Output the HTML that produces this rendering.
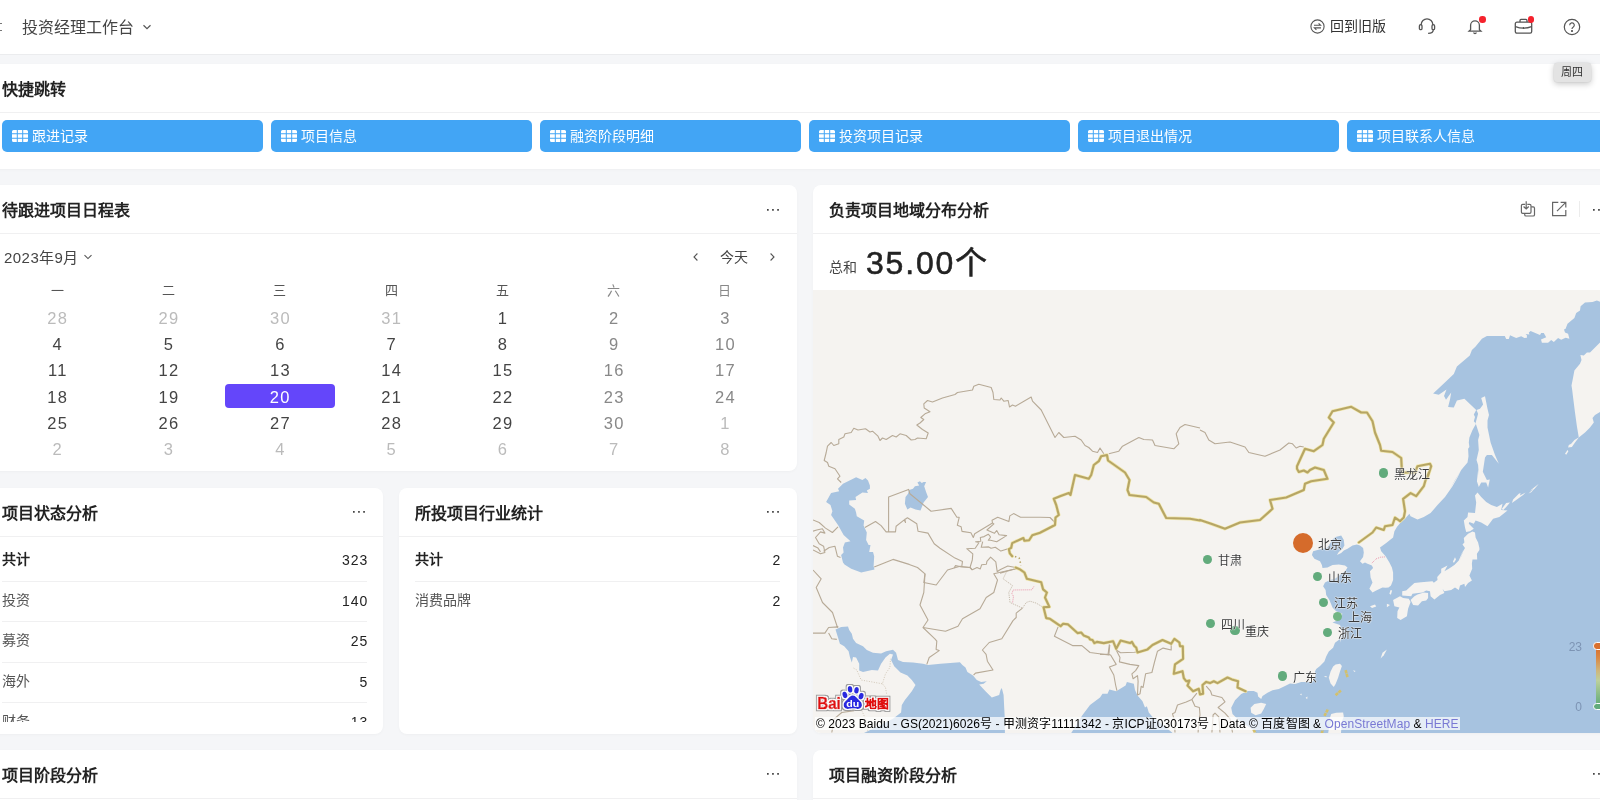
<!DOCTYPE html>
<html lang="zh-CN">
<head>
<meta charset="utf-8">
<title>投资经理工作台</title>
<style>
*{box-sizing:border-box;margin:0;padding:0}
html{will-change:transform}
html,body{width:1600px;height:800px;overflow:hidden;background:#f5f6f8;font-family:"Liberation Sans",sans-serif;color:#333}
#app{position:absolute;left:0;top:0;width:1600px;height:800px;overflow:hidden;background:#f5f6f8}
.abs{position:absolute}
.hdr{position:absolute;left:0;top:0;width:1600px;height:55px;background:#fff;border-bottom:1px solid #ebecee}
.hdr .ttl{position:absolute;left:22px;top:15.5px;font-size:16px;line-height:24px;color:#444;font-weight:500}
.card{position:absolute;background:#fff;border-radius:8px;box-shadow:0 1px 3px rgba(0,0,0,.03)}
.ct{position:absolute;left:0;top:0;right:0;height:49px;border-bottom:1px solid #f0f0f1}
.ct b{position:absolute;top:14.5px;font-size:16px;line-height:22px;font-weight:700;color:#222}
.dots{position:absolute;top:14px;font-size:16px;line-height:22px;color:#666;letter-spacing:1px}
.btn{position:absolute;top:56.2px;height:32.3px;width:261px;background:#42a5f5;border-radius:5px;color:#fff;font-size:14px;line-height:32px;padding-left:30px}
.btn svg{position:absolute;left:10px;top:10px}
.cal{position:absolute;left:1.5px;top:93px;width:779px}
.cal div{position:absolute;width:111.3px;text-align:center;font-size:16.5px;line-height:24px;color:#444;margin-top:1px;letter-spacing:1.3px;padding-left:1.3px}
.cal .w{font-size:13px;color:#555;margin-top:0;letter-spacing:0;padding-left:0}
.cal .we{color:#888}
.cal .o{color:#bbb}
.cal .sel{background:#6446fa;color:#fff;border-radius:4px;width:110px;margin-top:0;line-height:26px;height:24px;}
.row{position:absolute;left:2px;height:40.6px;font-size:14px;line-height:37.5px;color:#555;border-bottom:1px solid #f0f0f1}
.row i{position:absolute;right:-1.3px;top:1px;font-style:normal;color:#222;font-size:14px;letter-spacing:1px}
.row.t{font-weight:700;color:#222}
.row.t i{font-weight:400}
.mk{position:absolute;border-radius:50%}
.ml{position:absolute;font-size:12px;line-height:16px;color:#3a3a3a;white-space:nowrap;text-shadow:0 0 1.5px #fff,0 0 1.5px #fff,0 0 1px #fff}
.lg{position:absolute;width:30px;text-align:right;font-size:12px;line-height:16px;color:#7d94b4}
.cp{position:absolute;height:13.5px;font-size:12px;line-height:15.5px;overflow:hidden;letter-spacing:.065px;color:#000;background:rgba(255,255,255,.7);white-space:nowrap;padding:0 1px}
.cp span{color:#7979d4}
</style>
</head>
<body>
<div id="app">
<!-- header -->
<div class="hdr">
  <div class="abs" style="left:0;top:22.5px;width:1.5px;height:8px;border-top:1.5px solid #777;border-bottom:1.5px solid #777"></div>
  <div class="ttl">投资经理工作台</div>
  <svg class="abs" style="left:141px;top:21px" width="12" height="12" viewBox="0 0 12 12"><path d="M2.5 4.2 L6 7.6 L9.5 4.2" fill="none" stroke="#555" stroke-width="1.2"/></svg>
  <!-- right icons -->
  <svg class="abs" style="left:1309px;top:18px" width="17" height="17" viewBox="0 0 17 17" fill="none" stroke="#555" stroke-width="1.1"><circle cx="8.5" cy="8.5" r="6.6"/><path d="M5 7.3h6.6l-2-2M12 9.9H5.4l2 2"/></svg>
  <div class="abs" style="left:1330px;top:16px;font-size:14px;line-height:21px;color:#333">回到旧版</div>
  <svg class="abs" style="left:1417px;top:16px" width="20" height="20" viewBox="0 0 20 20" fill="none" stroke="#555" stroke-width="1.3"><path d="M4.2 9.3V8.6a5.8 5.8 0 0 1 11.6 0v.7"/><rect x="2.4" y="8.7" width="2.6" height="5" rx="1.3"/><rect x="15" y="8.7" width="2.6" height="5" rx="1.3"/><path d="M16.3 13.7c0 2.2-2 3.6-5.2 3.6"/></svg>
  <svg class="abs" style="left:1465px;top:16px" width="20" height="20" viewBox="0 0 20 20" fill="none" stroke="#555" stroke-width="1.3"><path d="M5.6 13.6V9.2a4.4 4.4 0 0 1 8.8 0v4.4l1.6 1.6H4z"/><path d="M8.6 16.6a1.5 1.5 0 0 0 2.8 0"/></svg>
  <div class="abs" style="left:1479px;top:16px;width:6.5px;height:6.5px;border-radius:50%;background:#f5222d"></div>
  <svg class="abs" style="left:1513px;top:16px" width="21" height="20" viewBox="0 0 21 20" fill="none" stroke="#555" stroke-width="1.3"><rect x="2.3" y="6.2" width="16.4" height="11" rx="1.6"/><path d="M7 6V4.4c0-.6.4-1 1-1h5c.6 0 1 .4 1 1V6M2.5 10.6c3 1.2 5 1.6 8 1.6s5-.4 8-1.6M10.5 11v2"/></svg>
  <div class="abs" style="left:1527.5px;top:16px;width:6.5px;height:6.5px;border-radius:50%;background:#f5222d"></div>
  <svg class="abs" style="left:1562px;top:16.5px" width="20" height="20" viewBox="0 0 20 20" fill="none" stroke="#555" stroke-width="1.2"><circle cx="10" cy="10" r="7.7"/><path d="M7.7 8.2a2.3 2.3 0 1 1 3.4 2c-.8.5-1.1.9-1.1 1.8"/><circle cx="10" cy="14" r=".5" fill="#555"/></svg>
</div>

<!-- quick jump -->
<div class="card" style="left:-8px;top:64px;width:1620px;height:104.5px">
  <div class="ct"><b style="left:10px">快捷跳转</b></div>
  <div class="btn" style="left:10px"><svg width="16" height="12" viewBox="0 0 16 12"><path fill="#fff" d="M1.5 0h3.3v3.3H0V1.5A1.5 1.5 0 0 1 1.5 0zM5.8 0h4.4v3.3H5.8zM11.2 0h3.3A1.5 1.5 0 0 1 16 1.500V3.3h-4.8zM0 4.300h4.8v3.400H0zM5.8 4.300h4.400v3.400H5.800zM11.200 4.300H16v3.400h-4.800zM0 8.700h4.800V12H1.500A1.500 1.500 0 0 1 0 10.500zM5.800 8.700h4.400V12H5.800zM11.200 8.700H16v1.800a1.500 1.500 0 0 1-1.500 1.500h-3.300z"/></svg>跟进记录</div>
  <div class="btn" style="left:279px"><svg width="16" height="12" viewBox="0 0 16 12"><path fill="#fff" d="M1.5 0h3.3v3.3H0V1.5A1.5 1.5 0 0 1 1.5 0zM5.8 0h4.400v3.300H5.800zM11.200 0h3.300A1.500 1.500 0 0 1 16 1.500V3.300h-4.800zM0 4.300h4.800v3.400H0zM5.800 4.300h4.400v3.400H5.800zM11.200 4.300H16v3.400h-4.800zM0 8.700h4.800V12H1.500A1.500 1.500 0 0 1 0 10.500zM5.800 8.700h4.400V12H5.800zM11.200 8.700H16v1.800a1.500 1.500 0 0 1-1.500 1.500h-3.300z"/></svg>项目信息</div>
  <div class="btn" style="left:548.1px"><svg width="16" height="12" viewBox="0 0 16 12"><path fill="#fff" d="M1.5 0h3.3v3.3H0V1.5A1.5 1.5 0 0 1 1.5 0zM5.800 0h4.400v3.300H5.800zM11.200 0h3.300A1.500 1.500 0 0 1 16 1.500V3.300h-4.800zM0 4.300h4.800v3.400H0zM5.800 4.300h4.400v3.400H5.800zM11.200 4.300H16v3.400h-4.800zM0 8.700h4.800V12H1.500A1.500 1.500 0 0 1 0 10.500zM5.800 8.700h4.400V12H5.800zM11.200 8.700H16v1.800a1.500 1.500 0 0 1-1.500 1.500h-3.300z"/></svg>融资阶段明细</div>
  <div class="btn" style="left:817.2px"><svg width="16" height="12" viewBox="0 0 16 12"><path fill="#fff" d="M1.5 0h3.3v3.3H0V1.5A1.5 1.5 0 0 1 1.5 0zM5.800 0h4.400v3.300H5.800zM11.200 0h3.300A1.500 1.500 0 0 1 16 1.500V3.300h-4.800zM0 4.300h4.800v3.400H0zM5.800 4.300h4.400v3.400H5.800zM11.200 4.300H16v3.400h-4.800zM0 8.700h4.800V12H1.500A1.500 1.500 0 0 1 0 10.500zM5.800 8.700h4.400V12H5.800zM11.200 8.700H16v1.800a1.500 1.500 0 0 1-1.500 1.500h-3.300z"/></svg>投资项目记录</div>
  <div class="btn" style="left:1086.2px"><svg width="16" height="12" viewBox="0 0 16 12"><path fill="#fff" d="M1.5 0h3.3v3.3H0V1.5A1.5 1.5 0 0 1 1.5 0zM5.800 0h4.400v3.300H5.800zM11.200 0h3.300A1.500 1.500 0 0 1 16 1.500V3.300h-4.800zM0 4.300h4.800v3.400H0zM5.800 4.300h4.400v3.400H5.800zM11.200 4.300H16v3.400h-4.800zM0 8.700h4.800V12H1.500A1.500 1.500 0 0 1 0 10.500zM5.800 8.700h4.400V12H5.800zM11.200 8.700H16v1.800a1.500 1.500 0 0 1-1.500 1.500h-3.300z"/></svg>项目退出情况</div>
  <div class="btn" style="left:1355.3px"><svg width="16" height="12" viewBox="0 0 16 12"><path fill="#fff" d="M1.5 0h3.3v3.3H0V1.5A1.5 1.5 0 0 1 1.5 0zM5.800 0h4.400v3.300H5.800zM11.200 0h3.300A1.500 1.500 0 0 1 16 1.500V3.300h-4.800zM0 4.300h4.800v3.400H0zM5.800 4.300h4.400v3.400H5.800zM11.200 4.300H16v3.400h-4.800zM0 8.700h4.800V12H1.500A1.500 1.500 0 0 1 0 10.500zM5.800 8.700h4.400V12H5.800zM11.200 8.700H16v1.800a1.500 1.500 0 0 1-1.500 1.500h-3.300z"/></svg>项目联系人信息</div>
</div>
<!-- tooltip -->
<div class="abs" style="left:1554px;top:62.5px;width:36.5px;height:19.5px;background:#e3e3e3;border-radius:3px;box-shadow:0 2px 6px rgba(0,0,0,.22),0 0 0 .5px rgba(0,0,0,.06);font-size:11px;line-height:19.5px;text-align:center;color:#333">周四</div>

<!-- calendar card -->
<div class="card" style="left:-8px;top:185px;width:805px;height:286px">
  <div class="ct"><b style="left:10px">待跟进项目日程表</b><svg class="abs" style="left:774.90px;top:24.05px" width="13" height="2" viewBox="0 0 13 2"><path fill="#444" d="M0 0h1.700v1.700H0zM5.100 0h1.700v1.700H5.100zM10.200 0h1.700v1.700H10.200z"/></svg></div>
  <div class="abs" style="left:12px;top:61.5px;font-size:15px;line-height:22px;color:#444;letter-spacing:.45px">2023年9月</div>
  <svg class="abs" style="left:90px;top:66px" width="12" height="12" viewBox="0 0 12 12"><path d="M2.5 4.2 L6 7.6 L9.5 4.2" fill="none" stroke="#555" stroke-width="1.1"/></svg>
  <svg class="abs" style="left:698px;top:66px" width="12" height="12" viewBox="0 0 12 12"><path d="M7.4 2.5 L4 6 L7.4 9.5" fill="none" stroke="#555" stroke-width="1.1"/></svg>
  <div class="abs" style="left:728px;top:61px;font-size:14px;line-height:22px;color:#444">今天</div>
  <svg class="abs" style="left:774px;top:66px" width="12" height="12" viewBox="0 0 12 12"><path d="M4.6 2.5 L8 6 L4.6 9.5" fill="none" stroke="#555" stroke-width="1.1"/></svg>
  <div class="cal" style="left:9.5px">
<div class="w" style="left:0.0px;top:1px">一</div><div class="w" style="left:111.3px;top:1px">二</div><div class="w" style="left:222.6px;top:1px">三</div><div class="w" style="left:333.9px;top:1px">四</div><div class="w" style="left:445.2px;top:1px">五</div><div class="w we" style="left:556.5px;top:1px">六</div><div class="w we" style="left:667.8px;top:1px">日</div>
<div class="o" style="left:0.0px;top:27.0px">28</div><div class="o" style="left:111.3px;top:27.0px">29</div><div class="o" style="left:222.6px;top:27.0px">30</div><div class="o" style="left:333.9px;top:27.0px">31</div><div style="left:445.2px;top:27.0px">1</div><div class="we" style="left:556.5px;top:27.0px">2</div><div class="we" style="left:667.8px;top:27.0px">3</div>
<div style="left:0.0px;top:53.2px">4</div><div style="left:111.3px;top:53.2px">5</div><div style="left:222.6px;top:53.2px">6</div><div style="left:333.9px;top:53.2px">7</div><div style="left:445.2px;top:53.2px">8</div><div class="we" style="left:556.5px;top:53.2px">9</div><div class="we" style="left:667.8px;top:53.2px">10</div>
<div style="left:0.0px;top:79.4px">11</div><div style="left:111.3px;top:79.4px">12</div><div style="left:222.6px;top:79.4px">13</div><div style="left:333.9px;top:79.4px">14</div><div style="left:445.2px;top:79.4px">15</div><div class="we" style="left:556.5px;top:79.4px">16</div><div class="we" style="left:667.8px;top:79.4px">17</div>
<div style="left:0.0px;top:105.6px">18</div><div style="left:111.3px;top:105.6px">19</div><div class="sel" style="left:223.2px;top:105.6px">20</div><div style="left:333.9px;top:105.6px">21</div><div style="left:445.2px;top:105.6px">22</div><div class="we" style="left:556.5px;top:105.6px">23</div><div class="we" style="left:667.8px;top:105.6px">24</div>
<div style="left:0.0px;top:131.8px">25</div><div style="left:111.3px;top:131.8px">26</div><div style="left:222.6px;top:131.8px">27</div><div style="left:333.9px;top:131.8px">28</div><div style="left:445.2px;top:131.8px">29</div><div class="we" style="left:556.5px;top:131.8px">30</div><div class="o" style="left:667.8px;top:131.8px">1</div>
<div class="o" style="left:0.0px;top:158.0px">2</div><div class="o" style="left:111.3px;top:158.0px">3</div><div class="o" style="left:222.6px;top:158.0px">4</div><div class="o" style="left:333.9px;top:158.0px">5</div><div class="o" style="left:445.2px;top:158.0px">6</div><div class="o" style="left:556.5px;top:158.0px">7</div><div class="o" style="left:667.8px;top:158.0px">8</div>
</div>
</div>

<!-- status card -->
<div class="card" style="left:-8px;top:488px;width:391px;height:245.6px;overflow:hidden">
  <div class="ct"><b style="left:10px">项目状态分析</b><svg class="abs" style="left:360.90px;top:23.05px" width="13" height="2" viewBox="0 0 13 2"><path fill="#444" d="M0 0h1.700v1.700H0zM5.100 0h1.700v1.700H5.100zM10.200 0h1.700v1.700H10.200z"/></svg></div>
  <div class="abs" style="left:8px;top:53.4px;width:369px;height:181px;overflow:hidden">
    <div class="row t" style="top:0;width:365px">共计<i>323</i></div>
    <div class="row" style="top:40.4px;width:365px">投资<i>140</i></div>
    <div class="row" style="top:80.8px;width:365px">募资<i>25</i></div>
    <div class="row" style="top:121.2px;width:365px">海外<i>5</i></div>
    <div class="row" style="top:161.6px;width:365px">财务<i>13</i></div>
  </div>
</div>

<!-- industry card -->
<div class="card" style="left:399px;top:488px;width:398px;height:245.6px">
  <div class="ct"><b style="left:16px">所投项目行业统计</b><svg class="abs" style="left:367.90px;top:23.05px" width="13" height="2" viewBox="0 0 13 2"><path fill="#444" d="M0 0h1.700v1.700H0zM5.100 0h1.700v1.700H5.100zM10.200 0h1.700v1.700H10.200z"/></svg></div>
  <div class="abs" style="left:14px;top:53.4px;width:369px;height:181px;overflow:hidden">
    <div class="row t" style="top:0;width:365px">共计<i>2</i></div>
    <div class="row" style="top:40.4px;width:365px;border-bottom:none">消费品牌<i>2</i></div>
  </div>
</div>

<!-- stage card -->
<div class="card" style="left:-8px;top:750px;width:805px;height:100px">
  <div class="ct"><b style="left:10px">项目阶段分析</b><svg class="abs" style="left:774.90px;top:23.05px" width="13" height="2" viewBox="0 0 13 2"><path fill="#444" d="M0 0h1.700v1.700H0zM5.100 0h1.700v1.700H5.100zM10.200 0h1.700v1.700H10.200z"/></svg></div>
</div>

<!-- finance stage card -->
<div class="card" style="left:813px;top:750px;width:800px;height:100px">
  <div class="ct"><b style="left:16px">项目融资阶段分析</b><svg class="abs" style="left:780.35px;top:23.05px" width="13" height="2" viewBox="0 0 13 2"><path fill="#444" d="M0 0h1.700v1.700H0zM5.100 0h1.700v1.700H5.100zM10.200 0h1.700v1.700H10.200z"/></svg></div>
</div>

<!-- map card -->
<div class="card" id="mapcard" style="left:813px;top:185px;width:800px;height:548px;overflow:hidden;border-radius:8px 0 0 8px">
  <div class="ct"><b style="left:16px">负责项目地域分布分析</b><svg class="abs" style="left:780.35px;top:24.05px" width="13" height="2" viewBox="0 0 13 2"><path fill="#444" d="M0 0h1.700v1.700H0zM5.100 0h1.700v1.700H5.100zM10.200 0h1.700v1.700H10.200z"/></svg></div>
  <svg class="abs" style="left:706px;top:15px" width="18" height="18" viewBox="0 0 18 18" fill="none" stroke="#666" stroke-width="1.2"><path d="M6.2 4.400H3.700a1.300 1.300 0 0 0-1.300 1.300v6.300a1.300 1.300 0 0 0 1.300 1.300h7a1.300 1.300 0 0 0 1.300-1.300V5.700a1.300 1.300 0 0 0-1.300-1.300H8.300"/><path d="M7.200 1.200v7.600M4.600 6.500l2.600 2.500 2.600-2.500"/><path d="M5.700 13.500v1.200a1.300 1.300 0 0 0 1.300 1.300h7.200a1.300 1.300 0 0 0 1.300-1.300V8.200a1.300 1.300 0 0 0-1.300-1.300h-2"/></svg>
<svg class="abs" style="left:737px;top:15px" width="18" height="18" viewBox="0 0 18 18" fill="none" stroke="#666" stroke-width="1.2"><path d="M8.300 2.400H2.600v13.200h13.200V10"/><path d="M10.600 2.400h5.200v5.200M15.800 2.400L7 11.200"/></svg>
<div class="abs" style="left:766px;top:16px;width:1px;height:16px;background:#ececec"></div>
  <div class="abs" style="left:16px;top:73px;font-size:14px;line-height:18px;color:#444">总和</div>
  <div class="abs" style="left:53px;top:56px;font-size:32px;line-height:44px;color:#222;letter-spacing:1.8px;-webkit-text-stroke:.55px #222">35.00个</div>
  <!--MAP-->
<svg class="abs" style="left:0;top:105px" width="800" height="443" viewBox="813 290 800 443">
<rect x="813" y="290" width="800" height="443" fill="#f5f3f0"/>
<g fill="#a7c3e0">
<path d="M1602.5 302.5 L1596.9 300.6 L1592.5 301.9 L1585.0 302.5 L1580.6 306.2 L1580.0 310.6 L1576.2 313.1 L1574.4 318.1 L1567.5 323.8 L1565.6 328.8 L1564.0 329.4 L1565.0 332.5 L1568.1 333.8 L1569.4 338.8 L1565.6 337.8 L1561.2 339.8 L1558.1 338.1 L1553.8 341.9 L1551.2 340.0 L1548.1 342.8 L1541.9 342.8 L1541.0 339.4 L1546.2 337.2 L1543.8 333.1 L1541.2 333.1 L1540.0 335.0 L1530.6 331.0 L1528.8 332.5 L1529.4 334.4 L1525.6 334.0 L1526.9 335.2 L1526.9 337.8 L1524.4 338.1 L1521.2 336.2 L1516.2 338.1 L1510.0 335.2 L1508.8 339.0 L1506.2 339.0 L1504.8 336.0 L1486.9 336.0 L1481.9 338.8 L1475.6 346.5 L1471.9 350.0 L1469.8 355.6 L1456.9 366.5 L1453.8 374.0 L1446.2 381.2 L1436.9 390.0 L1433.1 393.5 L1438.8 394.8 L1446.5 389.5 L1444.0 396.0 L1446.0 399.8 L1451.2 392.5 L1450.0 399.4 L1448.1 406.9 L1453.8 407.5 L1456.9 400.6 L1464.4 398.8 L1476.2 410.0 L1473.8 414.4 L1475.0 416.9 L1473.8 421.2 L1476.0 423.8 L1472.5 430.0 L1469.4 437.5 L1468.8 442.5 L1469.4 446.9 L1468.1 448.8 L1468.5 456.2 L1467.5 462.5 L1461.2 470.0 L1455.0 480.0 L1449.4 490.0 L1461.2 470.0 L1457.5 477.5 L1452.5 486.2 L1445.0 496.9 L1437.5 505.0 L1430.6 513.1 L1423.8 516.9 L1417.5 519.4 L1410.6 516.2 L1409.4 513.8 L1405.0 518.8 L1400.6 522.5 L1396.9 526.9 L1394.4 531.2 L1393.1 537.5 L1386.2 543.1 L1380.0 547.5 L1381.2 551.2 L1385.6 556.2 L1389.4 562.5 L1391.9 567.5 L1393.1 572.5 L1393.1 580.0 L1391.0 585.6 L1388.5 587.5 L1385.6 587.8 L1382.5 587.5 L1376.2 590.6 L1372.5 592.5 L1369.4 588.8 L1372.5 582.5 L1370.6 577.5 L1370.0 571.2 L1373.1 568.1 L1371.9 565.6 L1367.5 563.8 L1365.0 562.5 L1362.5 563.8 L1360.0 561.2 L1363.1 556.9 L1363.8 552.5 L1363.1 548.1 L1360.0 545.6 L1356.9 544.4 L1352.5 545.6 L1347.5 548.8 L1343.8 550.6 L1341.2 553.1 L1336.9 555.0 L1338.8 551.9 L1342.5 548.8 L1344.4 545.6 L1343.8 540.0 L1341.2 535.6 L1335.6 536.9 L1331.9 540.0 L1330.0 543.8 L1327.5 547.5 L1317.5 550.0 L1313.1 551.2 L1311.9 555.0 L1314.4 558.8 L1320.0 561.2 L1321.9 565.0 L1322.5 568.1 L1327.5 567.5 L1332.5 565.0 L1338.8 564.4 L1345.0 565.6 L1347.5 567.5 L1345.6 570.6 L1340.0 575.0 L1335.0 578.8 L1330.0 580.0 L1325.0 582.5 L1323.1 586.2 L1325.6 590.0 L1326.2 595.0 L1329.4 600.0 L1332.5 607.5 L1336.2 611.2 L1342.5 613.8 L1338.8 620.0 L1332.5 622.5 L1340.0 625.0 L1342.5 632.5 L1340.0 642.5 L1340.0 639.0 L1335.0 642.8 L1333.1 647.8 L1328.8 651.5 L1326.2 656.5 L1324.4 661.5 L1320.0 665.9 L1316.2 669.0 L1315.0 671.5 L1315.6 675.2 L1312.5 681.5 L1307.5 682.1 L1301.2 682.1 L1295.0 684.0 L1290.0 683.4 L1285.0 685.9 L1278.8 689.0 L1272.5 690.2 L1267.5 692.8 L1262.5 695.9 L1261.2 699.0 L1258.1 696.5 L1257.5 692.8 L1253.8 690.9 L1247.5 690.9 L1241.2 694.0 L1235.0 700.2 L1231.2 707.8 L1232.5 714.0 L1238.8 720.2 L1246.2 725.2 L1253.8 730.2 L1256.2 734.0 L1256.2 737.8 L1620.0 740.0 L1620.0 411.0 L1602.5 410.6 L1595.0 415.0 L1592.5 418.1 L1593.8 422.5 L1590.0 427.5 L1585.0 432.5 L1578.8 437.5 L1578.8 437.5 L1576.9 426.2 L1575.0 412.5 L1573.1 397.5 L1572.2 390.0 L1571.5 385.6 L1573.1 377.5 L1574.4 370.6 L1580.0 363.8 L1581.5 360.0 L1580.4 355.0 L1583.8 355.6 L1586.9 352.5 L1590.0 352.5 L1602.5 340.0Z"/>
<path d="M843.0 483.8 L856.1 477.2 L862.4 480.0 L865.5 478.1 L868.0 480.6 L869.9 485.6 L869.9 488.8 L866.8 490.6 L868.0 493.1 L862.4 492.5 L855.5 496.9 L856.1 500.0 L849.2 500.6 L849.2 504.4 L854.9 508.8 L856.1 512.5 L856.8 516.2 L864.2 520.6 L863.6 525.6 L866.8 532.5 L866.1 540.0 L868.6 545.0 L870.5 545.0 L869.2 551.9 L873.0 551.9 L874.2 556.2 L873.6 566.2 L874.5 569.5 L861.2 572.5 L851.2 568.8 L844.5 564.5 L843.0 562.5 L841.1 555.0 L843.6 552.5 L843.0 547.5 L844.9 542.5 L850.5 541.2 L843.6 535.0 L838.0 525.0 L831.1 515.0 L832.4 511.2 L830.5 505.0 L826.1 501.9 L831.1 493.1 L839.2 491.2 L838.0 488.8Z"/>
<path d="M909.2 490.0 L913.0 488.8 L914.9 486.2 L919.2 485.6 L917.4 482.5 L919.9 481.2 L921.8 483.1 L923.6 481.9 L926.1 481.9 L924.2 486.2 L926.1 491.9 L928.0 496.9 L923.6 502.5 L920.5 510.6 L915.5 509.4 L910.5 507.5 L907.4 509.4 L904.9 503.8 L905.5 496.9 L908.0 493.8Z"/>
<path d="M835.5 629.4 L841.1 626.9 L848.0 626.5 L849.2 630.0 L851.8 633.8 L853.0 638.8 L856.1 643.1 L863.0 646.2 L866.8 650.0 L873.0 652.8 L881.1 653.5 L886.1 651.2 L893.0 649.8 L896.1 652.8 L898.0 660.0 L903.0 661.9 L913.0 662.5 L923.0 663.8 L928.0 665.0 L940.5 663.8 L959.9 662.2 L962.4 665.0 L965.5 667.5 L967.4 671.9 L973.0 675.6 L976.8 680.0 L981.1 681.9 L986.8 681.2 L983.6 683.8 L979.2 684.4 L985.5 691.2 L991.8 697.5 L999.2 695.0 L1000.5 690.0 L1001.8 688.1 L1003.6 695.0 L1004.2 707.5 L1004.9 720.0 L1004.9 735.0 L859.9 735.0 L893.0 718.8 L901.1 712.5 L901.8 705.0 L904.9 700.0 L911.8 691.2 L915.5 685.0 L911.8 680.0 L907.4 675.6 L900.5 672.5 L894.2 666.2 L891.1 660.0 L893.0 654.4 L889.9 653.8 L885.5 657.5 L881.1 663.8 L878.0 670.6 L871.8 670.0 L863.0 671.9 L859.2 670.6 L859.2 663.8 L856.1 657.5 L853.0 656.9 L851.8 662.5 L849.9 656.9 L848.6 651.2 L844.2 646.2 L839.9 643.8 L838.0 637.5Z"/>
<path d="M1070.0 735.0 L1082.5 715.0 L1090.0 705.0 L1100.0 697.5 L1102.5 693.8 L1107.5 693.8 L1109.4 689.4 L1116.2 691.2 L1125.6 685.6 L1126.9 681.9 L1133.8 683.8 L1135.0 690.0 L1137.5 695.6 L1142.5 701.2 L1145.0 707.5 L1146.9 706.2 L1148.8 712.5 L1152.5 716.9 L1160.0 722.5 L1175.0 735.0Z"/>
</g>
<g fill="#f5f3f0">
<path d="M1579.0 437.2 L1574.4 440.0 L1571.2 443.8 L1568.8 445.0 L1568.1 447.5 L1571.9 446.9 L1575.0 442.5Z"/>
<path d="M1567.5 450.0 L1565.0 453.8 L1566.2 454.8 L1568.4 451.2Z"/>
<path d="M1538.5 484.0 L1532.5 488.8 L1530.0 490.8 L1534.4 488.8Z"/>
<path d="M1485.0 396.2 L1481.2 398.1 L1483.1 404.4 L1480.0 408.8 L1476.5 410.0 L1478.1 413.8 L1475.6 423.1 L1479.4 435.0 L1478.1 440.0 L1478.8 450.0 L1476.5 460.0 L1478.1 465.0 L1478.8 475.0 L1478.1 470.0 L1476.9 481.2 L1478.8 486.9 L1481.2 482.5 L1486.2 482.5 L1488.1 487.5 L1489.8 479.4 L1486.9 480.0 L1483.1 472.5 L1486.2 476.2 L1482.8 471.9 L1485.0 457.5 L1486.9 455.0 L1491.9 455.0 L1498.8 463.8 L1495.0 455.0 L1490.6 442.5 L1487.5 427.5 L1487.5 420.6 L1489.0 415.0 L1487.5 408.8Z"/>
<path d="M1477.5 492.5 L1475.0 495.6 L1476.2 502.5 L1475.0 513.1 L1468.1 512.5 L1467.5 516.9 L1463.8 520.6 L1465.0 527.5 L1466.2 531.9 L1470.0 531.2 L1473.8 528.8 L1468.8 523.8 L1469.4 521.9 L1473.8 523.8 L1475.6 520.6 L1481.2 522.5 L1487.5 526.2 L1493.1 518.8 L1499.4 516.9 L1507.5 510.6 L1501.2 510.0 L1502.5 503.8 L1496.9 506.9 L1491.2 505.0 L1486.2 501.9 L1481.2 496.9Z"/>
<path d="M1501.9 508.8 L1506.2 503.1 L1510.0 502.5 L1506.2 506.9 L1503.1 510.2Z"/>
<path d="M1511.9 503.1 L1513.1 499.4 L1518.8 493.8 L1520.6 493.1 L1520.0 495.6 L1525.6 492.5 L1523.1 495.0 L1516.2 500.0Z"/>
<path d="M1528.5 493.4 L1538.8 484.0 L1531.2 492.2Z"/>
<path d="M1468.1 533.8 L1472.5 531.5 L1475.0 532.5 L1475.6 537.5 L1478.1 542.5 L1479.4 548.1 L1479.4 550.0 L1476.9 553.8 L1477.2 559.4 L1472.5 559.4 L1471.9 563.8 L1472.2 568.8 L1469.4 575.6 L1471.9 580.6 L1468.1 583.1 L1465.0 586.9 L1464.4 583.8 L1460.0 585.6 L1458.8 590.0 L1455.0 587.5 L1451.2 590.0 L1444.4 591.2 L1442.5 588.8 L1444.4 593.1 L1440.0 595.0 L1434.4 599.4 L1430.6 596.2 L1430.0 591.2 L1426.2 590.6 L1422.5 592.5 L1418.1 593.1 L1412.5 593.8 L1411.2 596.2 L1402.2 595.6 L1402.2 591.2 L1406.2 590.6 L1410.0 586.9 L1414.4 583.1 L1421.2 582.2 L1432.5 581.2 L1433.8 582.8 L1437.5 580.0 L1437.2 576.9 L1441.2 572.5 L1441.2 568.8 L1447.5 565.6 L1444.4 571.2 L1448.8 568.8 L1454.4 565.0 L1458.8 560.6 L1460.6 556.2 L1463.1 550.0 L1460.0 560.0 L1463.1 551.2 L1465.0 548.1 L1462.5 544.4 L1464.4 542.5 L1463.8 538.1Z"/>
<path d="M1453.1 561.2 L1455.0 557.2 L1456.0 559.4 L1453.8 563.1Z"/>
<path d="M1410.6 600.0 L1414.4 596.2 L1417.5 594.4 L1423.8 592.5 L1428.1 593.1 L1428.1 598.1 L1426.2 600.6 L1421.9 601.2 L1418.1 605.6 L1413.1 605.0Z"/>
<path d="M1393.1 600.0 L1400.0 596.2 L1403.1 598.1 L1408.8 598.8 L1410.6 601.9 L1408.1 608.8 L1406.9 616.2 L1400.6 620.0 L1397.2 618.1 L1397.5 611.2 L1399.4 607.5 L1394.4 606.2Z"/>
<path d="M1386.9 603.8 L1390.0 605.0 L1386.9 607.2Z"/>
<path d="M1389.4 593.8 L1390.6 590.0 L1392.1 590.6 L1390.9 594.8Z"/>
<path d="M1370.0 606.2 L1375.0 604.5 L1376.2 606.5 L1372.0 608.0Z"/>
<path d="M1335.6 664.6 L1340.0 663.8 L1341.9 665.9 L1340.0 671.5 L1338.1 677.8 L1335.6 684.0 L1333.8 687.1 L1330.6 683.4 L1328.8 677.8 L1330.6 671.5 L1333.1 666.5Z"/>
<path d="M1250.6 707.8 L1254.4 704.0 L1261.2 702.8 L1266.2 704.0 L1263.8 709.0 L1261.2 713.4 L1255.6 715.2 L1251.2 712.8Z"/>
<path d="M1331.2 714.0 L1336.2 712.8 L1343.1 712.5 L1343.8 716.5 L1341.9 721.5 L1340.6 737.8 L1327.5 737.8 L1328.8 729.0 L1331.2 721.5 L1330.0 717.8Z"/>
<path d="M1380.6 658.4 L1382.5 652.8 L1386.9 649.6 L1383.8 655.2Z"/>
<path d="M1300.0 694.0 L1301.9 693.8 L1301.2 695.5Z"/>
<path d="M1305.6 697.8 L1307.5 696.5 L1307.2 699.2Z"/>
<path d="M1323.8 675.9 L1326.9 676.2 L1326.2 677.5Z"/>
<path d="M1353.1 670.2 L1355.6 670.9 L1354.4 671.9Z"/>
</g>
<g fill="none" stroke="#b8aa90" stroke-width="0.6" stroke-dasharray="1 1.5">
<path d="M853.6 668.1 L856.8 670.0 L861.1 680.0 L882.4 683.8 L885.5 673.8 L889.9 667.5 L890.5 658.8"/>
<path d="M882.4 683.8 L885.5 687.5 L886.8 695.0"/>
<path d="M861.8 710.6 L865.5 718.8 L868.0 732.5"/>
</g>
<g fill="none" stroke="#b7aa97" stroke-width="1.1" stroke-linejoin="round">
<path d="M841.2 482.5 L837.5 478.8 L840.0 476.2 L835.0 468.8 L828.8 466.2 L827.5 462.5 L824.2 460.5 L826.2 452.5 L827.5 446.2 L831.2 442.5 L833.8 445.5 L838.8 443.8 L838.8 439.5 L843.8 437.0 L845.0 433.8 L851.2 432.5 L853.8 428.2 L858.0 430.0 L865.5 428.8 L870.0 432.0 L872.5 431.2 L878.0 436.2 L880.0 440.5 L882.5 438.0 L886.2 439.5 L892.5 435.5 L896.2 437.0 L900.0 433.8 L906.2 435.5 L911.2 440.0 L915.0 439.5 L917.5 438.0 L926.2 438.8 L928.2 433.0 L922.5 429.5 L916.8 425.0 L920.0 423.0 L923.8 419.5 L920.8 417.5 L925.0 413.8 L930.0 411.8 L924.2 408.0 L923.8 403.8 L927.5 400.5 L932.5 402.0 L942.5 398.0 L955.0 394.5 L957.5 392.5 L972.5 390.0 L973.8 386.2 L978.8 384.2 L991.2 387.5 L993.0 392.5 L993.8 399.5 L1000.0 400.0 L1001.2 398.0 L1003.8 401.2 L1008.2 400.5 L1009.5 407.0 L1012.5 405.0 L1015.5 406.2 L1031.2 397.0 L1032.5 401.2 L1041.2 410.0 L1055.0 437.5 L1058.8 432.5 L1063.8 437.5 L1075.0 436.2 L1081.2 440.0 L1085.0 445.5 L1088.8 447.5 L1092.5 451.2 L1097.5 452.5 L1100.0 448.0 L1103.8 453.8"/>
<path d="M1108.8 453.8 L1118.8 451.2 L1122.5 446.2 L1138.8 437.5 L1143.8 439.5 L1152.5 440.0 L1155.0 445.5 L1173.8 448.8 L1178.8 443.8 L1176.2 433.8 L1180.0 427.5 L1185.0 424.5 L1200.0 428.0"/>
<path d="M1200.0 430.0 L1205.0 432.5 L1208.8 440.0 L1215.0 443.8 L1230.0 442.0 L1245.0 447.0 L1248.8 452.5 L1265.0 456.2 L1280.0 450.0 L1288.8 443.0 L1292.5 443.8 L1296.2 448.0 L1300.0 446.2 L1303.8 447.0"/>
<path d="M888.6 531.9 L888.6 496.9 L908.6 489.4 L909.9 493.8 L931.1 511.2 L951.2 508.4 L956.9 517.3 L959.2 517.3 L957.3 525.3 L961.1 526.7 L962.0 531.4 L970.9 532.8 L973.3 537.5 L974.7 533.7 L992.5 523.0 L992.0 520.2 L997.7 517.3 L1008.9 521.6 L1009.8 515.9 L1013.6 513.6 L1020.6 517.3 L1040.0 517.3 L1050.0 517.5 L1055.0 522.5"/>
<path d="M864.9 527.5 L875.5 521.5 L881.1 525.6 L886.1 531.9 L895.5 531.9 L896.1 526.2 L904.9 519.4 L905.5 522.5 L904.2 520.0 L907.4 517.8 L916.8 523.8 L918.0 531.2 L928.0 533.1 L934.2 543.8 L940.0 548.3 L955.0 558.1 L962.5 561.4 L961.7 567.0"/>
<path d="M813.0 520.0 L819.2 522.5 L825.5 528.1 L832.4 532.5 L838.0 526.9"/>
<path d="M813.0 531.2 L816.8 530.0 L822.4 528.8 L824.9 533.1 L820.5 531.9 L815.5 537.5 L819.2 543.8 L823.6 546.2 L824.9 552.5 L820.5 553.8 L813.0 550.0"/>
<path d="M823.6 551.2 L829.2 547.5 L834.9 546.2 L837.4 556.2 L840.5 557.5"/>
<path d="M813.0 545.6 L818.0 548.1 L820.5 551.9"/>
<path d="M813.0 570.0 L821.2 578.8 L816.2 587.5 L822.5 602.5 L832.5 612.5 L837.5 627.5 L838.0 626.9 L828.6 627.5 L824.9 633.1 L813.0 633.1"/>
<path d="M828.6 633.1 L831.8 638.8 L836.8 639.4"/>
<path d="M874.2 566.9 L893.0 559.4 L909.2 564.4 L917.5 567.5 L925.0 573.8 L923.8 582.5 L936.2 585.0 L947.5 570.0 L960.0 566.2 L970.0 567.5 L972.3 569.8 L977.0 567.5 L980.3 568.9 L981.7 564.7 L986.4 564.2 L986.9 561.4 L990.6 557.2 L995.8 561.9 L997.2 571.7 L1000.0 569.7"/>
<path d="M925.0 573.8 L923.8 592.5 L920.0 605.0 L928.0 620.0 L923.0 627.5 L934.9 638.8 L936.8 641.2 L936.1 649.4 L939.2 650.6 L929.2 657.5 L926.8 664.4"/>
<path d="M923.0 627.5 L945.5 631.2 L958.0 626.2 L962.5 618.8 L980.0 608.8 L986.2 597.5 L993.8 592.5 L997.5 580.0 L993.8 573.8 L1016.2 568.8"/>
<path d="M973.6 675.0 L975.5 673.1 L993.0 670.0 L987.4 661.2 L986.1 654.4 L982.4 650.0 L989.2 642.5 L1001.8 638.8 L1013.0 620.6 L1016.2 617.5 L1016.2 613.1 L1022.5 608.1"/>
<path d="M1000.0 569.8 L1007.8 566.0 L1015.6 567.5"/>
<path d="M1000.0 573.1 L1015.6 568.8"/>
<path d="M1058.1 626.9 L1054.4 636.2 L1072.5 645.6 L1081.9 645.6 L1090.0 652.5 L1108.8 655.0 L1109.8 645.0"/>
<path d="M1100.0 654.4 L1108.1 654.4 L1109.4 644.4"/>
<path d="M1116.2 650.0 L1120.6 652.8 L1134.4 652.2 L1137.5 651.9"/>
<path d="M1108.1 654.4 L1110.6 655.0 L1116.2 664.4 L1109.4 666.9 L1113.8 675.0 L1115.6 685.0 L1116.9 690.6"/>
<path d="M1116.2 650.0 L1120.0 657.5 L1119.4 661.9 L1130.0 664.4 L1138.8 665.6 L1135.6 670.6 L1131.9 673.8 L1133.1 678.8 L1137.5 675.6 L1138.1 681.2 L1137.5 695.0 L1140.0 693.8 L1141.2 686.2 L1143.1 687.5 L1145.6 673.8 L1151.9 672.5 L1154.4 662.5 L1157.5 651.2 L1163.1 648.1 L1171.2 650.0 L1171.2 643.8"/>
<path d="M1196.9 693.1 L1191.9 699.4 L1186.2 701.9 L1177.5 705.0 L1175.0 712.5 L1172.5 713.8 L1174.4 720.0 L1175.0 732.5"/>
<path d="M1191.9 699.4 L1195.0 706.2 L1199.4 707.5 L1200.0 715.0 L1198.8 720.0 L1198.1 732.5"/>
<path d="M1206.2 686.2 L1210.6 691.2 L1211.9 695.0 L1221.9 697.5 L1225.0 701.9 L1218.1 707.5 L1225.0 713.1 L1230.0 718.8 L1232.5 732.5"/>
<path d="M1211.9 732.5 L1213.1 715.0 L1215.0 713.1 L1218.8 716.9 L1220.0 732.5"/>
<path d="M992.5 523.0 L993.9 523.9 L986.9 530.0 L994.4 533.3 L996.7 530.5 L999.1 534.7 L1006.6 535.6 L996.7 541.7 L990.6 540.3 L988.3 540.3 L990.6 537.0 L988.3 534.2 L984.1 536.6 L980.3 537.5 L980.8 541.2 L975.6 541.7 L978.9 542.7 L975.2 548.3 L966.7 548.7 L972.8 553.9 L972.3 560.0 L970.0 567.5"/>
<path d="M982.7 541.7 L981.2 547.3 L988.7 546.9 L991.1 548.3 L995.3 547.3 L1000.9 551.1 L1008.0 548.7"/>
<path d="M954.1 568.0 L955.5 565.6 L961.7 567.0 L970.0 567.5 L972.3 569.8"/>
<path d="M831.8 732.5 L834.2 718.8 L841.8 712.5 L854.2 710.6"/>
</g>
<g fill="none" stroke="#f0e6ab" stroke-width="3.4" stroke-linejoin="round" stroke-linecap="round">
<path d="M1012.2 556.2 L1009.8 553.4 L1008.9 549.2 L1011.2 547.8 L1012.2 543.1 L1023.4 538.0 L1024.4 540.8 L1029.1 540.3 L1032.3 535.2 L1040.0 532.8 L1055.0 525.0 L1055.5 517.5 L1058.8 515.0 L1056.2 505.0 L1053.8 498.8 L1060.0 496.2 L1068.8 493.0 L1070.5 495.0 L1075.0 475.0 L1088.8 478.8 L1091.2 475.0 L1093.8 465.0 L1098.8 461.2 L1101.2 456.2 L1107.0 455.0 L1108.0 460.5 L1125.0 472.5 L1129.5 480.0 L1127.5 490.0 L1129.5 495.0 L1146.2 497.0 L1153.8 502.5 L1158.8 503.8 L1166.2 518.0 L1190.0 518.8 L1200.0 520.5 L1200.0 520.0 L1211.2 523.8 L1225.0 528.8 L1240.0 522.5 L1260.0 520.0 L1272.5 508.8 L1270.0 500.0 L1286.2 497.5 L1303.8 490.0 L1305.0 483.8 L1311.2 481.2 L1327.5 478.8 L1323.8 470.0 L1315.0 467.5 L1310.0 470.0 L1307.5 472.5 L1303.8 470.5 L1298.8 472.0 L1297.0 468.8 L1297.0 466.2 L1305.0 448.8 L1313.8 451.2 L1322.5 445.0 L1323.8 438.8 L1333.8 422.5 L1328.8 417.5 L1332.5 411.2 L1351.2 406.8 L1361.2 412.5 L1367.0 412.5 L1372.5 421.2 L1375.0 432.5 L1380.0 445.0 L1381.2 450.8 L1392.5 452.0 L1401.2 458.0 L1402.0 472.5 L1415.0 472.5 L1417.5 466.2 L1430.0 463.8 L1431.2 466.2 L1427.5 477.5 L1429.0 472.5 L1425.6 480.0 L1423.8 486.2 L1416.2 496.2 L1410.6 493.1 L1403.1 498.8 L1405.0 511.2 L1403.8 517.5 L1400.0 521.2 L1395.0 517.5 L1392.5 525.0 L1385.0 526.2 L1383.8 530.0 L1376.2 527.5 L1372.5 532.5 L1358.8 542.5"/>
<path d="M1015.6 567.5 L1020.0 569.4 L1024.4 572.5 L1026.9 578.8 L1041.2 582.2 L1043.1 589.4 L1046.9 592.5 L1045.0 597.5 L1049.4 606.9 L1043.5 607.2 L1046.2 618.1 L1050.0 618.8 L1060.6 626.2 L1063.1 623.8 L1068.1 624.4 L1077.5 633.1 L1081.2 632.5 L1083.8 635.6 L1088.8 637.5 L1090.0 639.4 L1092.5 640.0 L1094.4 643.1 L1096.9 641.9 L1103.8 643.1 L1113.1 641.2 L1116.2 648.8 L1120.6 640.6 L1130.0 643.1 L1131.9 641.9 L1134.4 646.2 L1136.2 647.5 L1137.5 652.5 L1147.5 649.4 L1152.5 645.0 L1162.5 640.0 L1171.2 643.8 L1174.4 638.8 L1179.4 642.5 L1180.0 646.2 L1182.8 646.2 L1183.1 658.8 L1175.0 664.4 L1173.8 673.8 L1182.5 671.2 L1183.8 678.1 L1186.2 681.2 L1189.4 680.6 L1187.5 685.6 L1193.1 691.2 L1198.8 688.8 L1200.0 694.4 L1203.1 693.8 L1202.5 685.0 L1206.2 681.9 L1210.0 683.1 L1213.8 681.2 L1217.5 683.1 L1227.5 677.5 L1231.9 679.4 L1238.1 681.2 L1237.5 687.5 L1245.6 691.2"/>
</g>
<g fill="none" stroke="#b6a565" stroke-width="2.1" stroke-linejoin="round" stroke-linecap="round">
<path d="M1012.2 556.2 L1009.8 553.4 L1008.9 549.2 L1011.2 547.8 L1012.2 543.1 L1023.4 538.0 L1024.4 540.8 L1029.1 540.3 L1032.3 535.2 L1040.0 532.8 L1055.0 525.0 L1055.5 517.5 L1058.8 515.0 L1056.2 505.0 L1053.8 498.8 L1060.0 496.2 L1068.8 493.0 L1070.5 495.0 L1075.0 475.0 L1088.8 478.8 L1091.2 475.0 L1093.8 465.0 L1098.8 461.2 L1101.2 456.2 L1107.0 455.0 L1108.0 460.5 L1125.0 472.5 L1129.5 480.0 L1127.5 490.0 L1129.5 495.0 L1146.2 497.0 L1153.8 502.5 L1158.8 503.8 L1166.2 518.0 L1190.0 518.8 L1200.0 520.5 L1200.0 520.0 L1211.2 523.8 L1225.0 528.8 L1240.0 522.5 L1260.0 520.0 L1272.5 508.8 L1270.0 500.0 L1286.2 497.5 L1303.8 490.0 L1305.0 483.8 L1311.2 481.2 L1327.5 478.8 L1323.8 470.0 L1315.0 467.5 L1310.0 470.0 L1307.5 472.5 L1303.8 470.5 L1298.8 472.0 L1297.0 468.8 L1297.0 466.2 L1305.0 448.8 L1313.8 451.2 L1322.5 445.0 L1323.8 438.8 L1333.8 422.5 L1328.8 417.5 L1332.5 411.2 L1351.2 406.8 L1361.2 412.5 L1367.0 412.5 L1372.5 421.2 L1375.0 432.5 L1380.0 445.0 L1381.2 450.8 L1392.5 452.0 L1401.2 458.0 L1402.0 472.5 L1415.0 472.5 L1417.5 466.2 L1430.0 463.8 L1431.2 466.2 L1427.5 477.5 L1429.0 472.5 L1425.6 480.0 L1423.8 486.2 L1416.2 496.2 L1410.6 493.1 L1403.1 498.8 L1405.0 511.2 L1403.8 517.5 L1400.0 521.2 L1395.0 517.5 L1392.5 525.0 L1385.0 526.2 L1383.8 530.0 L1376.2 527.5 L1372.5 532.5 L1358.8 542.5"/>
<path d="M1015.6 567.5 L1020.0 569.4 L1024.4 572.5 L1026.9 578.8 L1041.2 582.2 L1043.1 589.4 L1046.9 592.5 L1045.0 597.5 L1049.4 606.9 L1043.5 607.2 L1046.2 618.1 L1050.0 618.8 L1060.6 626.2 L1063.1 623.8 L1068.1 624.4 L1077.5 633.1 L1081.2 632.5 L1083.8 635.6 L1088.8 637.5 L1090.0 639.4 L1092.5 640.0 L1094.4 643.1 L1096.9 641.9 L1103.8 643.1 L1113.1 641.2 L1116.2 648.8 L1120.6 640.6 L1130.0 643.1 L1131.9 641.9 L1134.4 646.2 L1136.2 647.5 L1137.5 652.5 L1147.5 649.4 L1152.5 645.0 L1162.5 640.0 L1171.2 643.8 L1174.4 638.8 L1179.4 642.5 L1180.0 646.2 L1182.8 646.2 L1183.1 658.8 L1175.0 664.4 L1173.8 673.8 L1182.5 671.2 L1183.8 678.1 L1186.2 681.2 L1189.4 680.6 L1187.5 685.6 L1193.1 691.2 L1198.8 688.8 L1200.0 694.4 L1203.1 693.8 L1202.5 685.0 L1206.2 681.9 L1210.0 683.1 L1213.8 681.2 L1217.5 683.1 L1227.5 677.5 L1231.9 679.4 L1238.1 681.2 L1237.5 687.5 L1245.6 691.2"/>
</g>
<g fill="none" stroke="#d3c06d" stroke-width="2.6" stroke-dasharray="3.2 0.7">
<path d="M1345.6 670.2 L1347.5 677.1"/>
<path d="M1335.6 695.2 L1341.2 690.2"/>
<path d="M1324.4 715.9 L1328.1 709.0"/>
<path d="M1320.6 737.8 L1322.8 729.6"/>
<path d="M1253.5 729.6 L1256.5 735.2"/>
</g>
<g fill="none" stroke="#e77f9b" stroke-width="0.8" stroke-dasharray="1 1">
<path d="M1033.8 586.5 L1031.9 589.8 L1013.1 590.0 L1011.9 593.8 L1013.5 596.2 L1012.5 603.1"/>
<path d="M1371.9 563.1 L1376.2 558.8 L1380.6 557.2 L1385.0 556.9"/>
</g>
<g fill="none" stroke="#b3a591" stroke-width="0.7" stroke-dasharray="1.2 1">
<path d="M1006.2 572.5 L1003.1 578.8 L1012.5 585.6 L1008.8 592.5 L1010.0 602.5 L1022.5 608.1 L1026.2 602.5 L1030.0 601.2 L1036.2 603.1 L1042.5 606.9"/>
</g>
<g fill="none" stroke="#b6a565" stroke-width="1.6" stroke-dasharray="1.4 2.6">
<path d="M1015.0 556.5 L1019.2 558.1 L1020.2 561.9 L1020.8 565.6"/>
</g>
</svg>
<!--/MAP-->
<!--OV-->
<div class="mk" style="left:565.6px;top:283.4px;width:9.2px;height:9.2px;background:#62ab7c"></div>
<div class="mk" style="left:479.5px;top:348.0px;width:20.0px;height:20.0px;background:#d56b2b"></div>
<div class="mk" style="left:389.9px;top:369.6px;width:9.2px;height:9.2px;background:#62ab7c"></div>
<div class="mk" style="left:499.9px;top:386.6px;width:9.2px;height:9.2px;background:#62ab7c"></div>
<div class="mk" style="left:506.1px;top:412.9px;width:9.2px;height:9.2px;background:#62ab7c"></div>
<div class="mk" style="left:519.9px;top:427.1px;width:9.2px;height:9.2px;background:#72b583"></div>
<div class="mk" style="left:509.9px;top:442.9px;width:9.2px;height:9.2px;background:#62ab7c"></div>
<div class="mk" style="left:392.9px;top:434.1px;width:9.2px;height:9.2px;background:#62ab7c"></div>
<div class="mk" style="left:417.4px;top:440.9px;width:9.2px;height:9.2px;background:#62ab7c"></div>
<div class="mk" style="left:464.9px;top:486.4px;width:9.2px;height:9.2px;background:#62ab7c"></div>
<div class="ml" style="left:580.6px;top:281.5px">黑龙江</div>
<div class="ml" style="left:505.3px;top:351.5px">北京</div>
<div class="ml" style="left:404.9px;top:367.8px">甘肃</div>
<div class="ml" style="left:514.9px;top:384.8px">山东</div>
<div class="ml" style="left:521.1px;top:411.0px">江苏</div>
<div class="ml" style="left:534.9px;top:425.2px">上海</div>
<div class="ml" style="left:524.9px;top:441.0px">浙江</div>
<div class="ml" style="left:407.9px;top:432.2px">四川</div>
<div class="ml" style="left:432.4px;top:439.0px">重庆</div>
<div class="ml" style="left:479.9px;top:484.5px">广东</div>
<div class="lg" style="left:739px;top:453.9px">23</div>
<div class="lg" style="left:739px;top:514.0px">0</div>
<div class="abs" style="left:783.2px;top:463.0px;width:10px;height:56px;background:linear-gradient(#d9702e 0%,#d98a47 18%,#cfb57a 40%,#bdd09c 58%,#93c08b 78%,#67ad7b 100%)"></div>
<div class="abs" style="left:780.4px;top:457.3px;width:14px;height:7.4px;border-radius:3.7px;background:#d9702e;border:1px solid #fff"></div>
<div class="abs" style="left:780.4px;top:517.9px;width:14px;height:7.4px;border-radius:3.7px;background:#62ab7c;border:1px solid #fff"></div>
<svg class="abs" style="left:-3px;top:495px" width="84" height="36" viewBox="810 680 84 36">
<defs><filter id="lg" x="-10%" y="-20%" width="120%" height="140%"><feMorphology in="SourceAlpha" operator="dilate" radius="1.5" result="d"/><feGaussianBlur in="d" stdDeviation="0.5" result="b"/><feFlood flood-color="#999"/><feComposite in2="b" operator="in" result="sh"/><feMorphology in="SourceAlpha" operator="dilate" radius="1.2" result="d2"/><feFlood flood-color="#fff"/><feComposite in2="d2" operator="in" result="w"/><feMerge><feMergeNode in="sh"/><feMergeNode in="w"/><feMergeNode in="SourceGraphic"/></feMerge></filter></defs>
<g filter="url(#lg)">
<text x="817.3" y="708.6" font-family="Liberation Sans, sans-serif" font-weight="700" font-size="16.6" fill="#e10a0a" stroke="#e10a0a" stroke-width="0.7" textLength="23.5" lengthAdjust="spacingAndGlyphs">Bai</text>
<g fill="#2b2be0"><ellipse cx="844.9" cy="694.9" rx="2.5" ry="3.4" transform="rotate(-20 844.9 694.9)"/><ellipse cx="850.1" cy="689.3" rx="2.4" ry="3.4" transform="rotate(-8 850.1 689.3)"/><ellipse cx="856.5" cy="690.3" rx="2.4" ry="3.4" transform="rotate(8 856.5 690.3)"/><ellipse cx="861.1" cy="696.2" rx="2.5" ry="3.4" transform="rotate(22 861.1 696.2)"/>
<path d="M852.8 695.3c2.600 0 3.800 2.300 5.800 4.300 2.200 2.200 3.600 3.400 3.400 5.900-.2 2.600-2.500 3.600-4.500 3.400-1.800-.2-3-.5-4.700-.5s-2.900.3-4.700.5c-2 .2-4.300-.8-4.500-3.400-.2-2.500 1.200-3.700 3.400-5.900 2-2 3.200-4.300 5.800-4.300z"/></g>
<text x="846.2" y="707.2" font-family="Liberation Sans, sans-serif" font-weight="700" font-size="9.5" fill="#fff" textLength="13" lengthAdjust="spacingAndGlyphs">du</text>
<text x="864.8" y="708" font-family="Liberation Sans, sans-serif" font-weight="700" font-size="11.8" fill="#e10a0a" stroke="#e10a0a" stroke-width="0.6">地图</text>
</g></svg>
<div class="cp" style="left:2px;top:531.8px">© 2023 Baidu - GS(2021)6026号 - 甲测资字11111342 - 京ICP证030173号 - Data © 百度智图 &amp; <span>OpenStreetMap</span> &amp; <span>HERE</span></div>
<!--/OV-->
</div>

</div>
</body>
</html>
